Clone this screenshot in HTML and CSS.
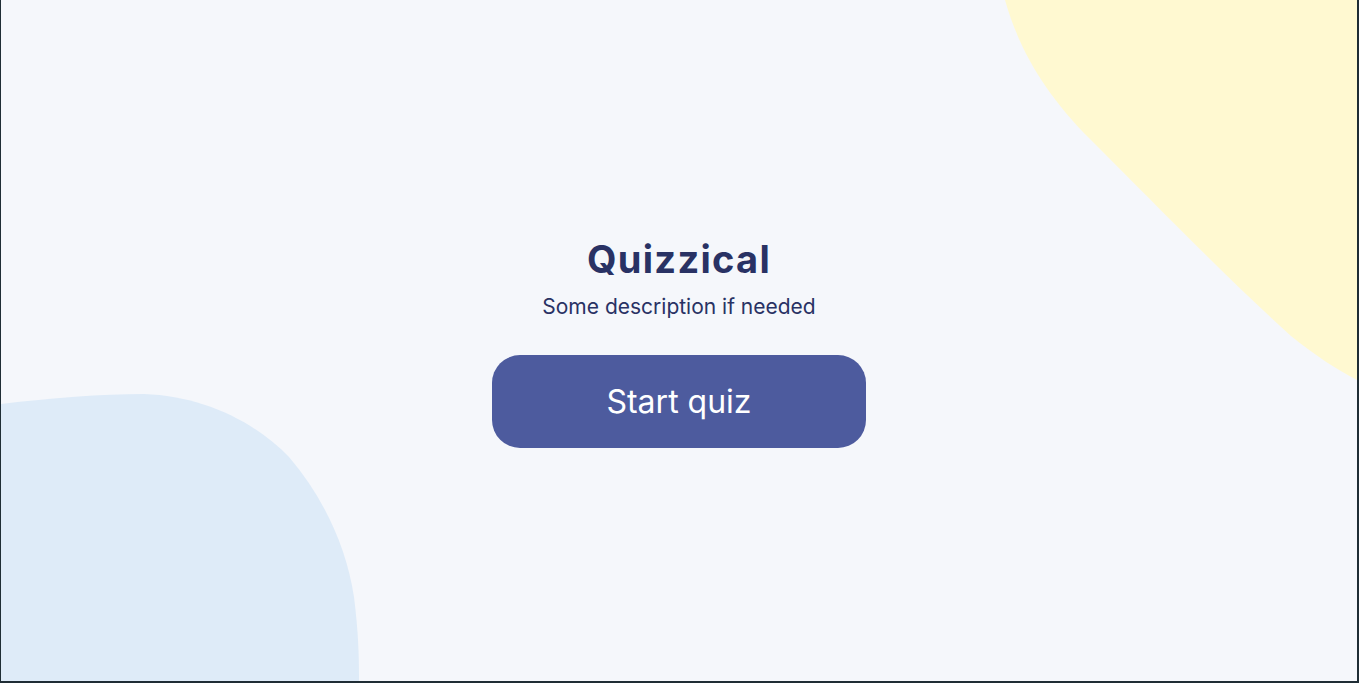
FILE: index.html
```html
<!DOCTYPE html>
<html lang="en">
<head>
<meta charset="utf-8">
<title>Quizzical</title>
<link rel="stylesheet" href="styles.css">
</head>
<body>
<div class="screen">
  <svg class="blobs" width="1356" height="681" viewBox="0 0 1356 681" aria-hidden="true">
    <path class="blob-yellow" d="M1004 0 C1018 50 1045 95 1090 140 C1160 210 1230 282 1290 336 C1315 356 1335 369 1356 380 L1356 0 Z"/>
    <path class="blob-blue" d="M0 404 C50 398 100 394 143 394 C200 396 252 420 288 457 C322 497 345 545 353 597 C357 630 358 650 358 681 L0 681 Z"/>
  </svg>
  <main class="intro">
    <h1 class="title">Quizzical</h1>
    <p class="desc">Some description if needed</p>
    <button class="start" type="button">Start quiz</button>
  </main>
</div>
</body>
</html>
```

FILE: styles.css
```css
html, body {
  margin: 0;
  padding: 0;
}
body {
  background: #1f2d35;
  width: 1359px;
  height: 683px;
  overflow: hidden;
  font-family: Inter, "Noto Sans", sans-serif;
}
.screen {
  position: relative;
  margin-left: 1px;
  width: 1356px;
  height: 681px;
  background: #f5f7fb;
  overflow: hidden;
  display: flex;
  align-items: center;
  justify-content: center;
}
.blobs {
  position: absolute;
  left: 0;
  top: 0;
}
.blob-yellow { fill: #fff9d1; }
.blob-blue { fill: #deebf8; }
.intro {
  position: relative;
  display: flex;
  flex-direction: column;
  align-items: center;
  margin-top: 2px;
}
.title {
  margin: 0;
  font-size: 38px;
  font-weight: 700;
  letter-spacing: 1.3px;
  color: #293264;
  line-height: 46px;
}
.desc {
  margin: 11px 0 0;
  font-size: 21px;
  font-weight: 400;
  color: #293264;
  line-height: 28px;
}
.start {
  margin-top: 34px;
  width: 374px;
  height: 93px;
  border: none;
  border-radius: 28px;
  background: #4d5b9e;
  color: #ffffff;
  font-family: Inter, "Noto Sans", sans-serif;
  font-size: 32px;
  font-weight: 400;
  cursor: pointer;
}
```
